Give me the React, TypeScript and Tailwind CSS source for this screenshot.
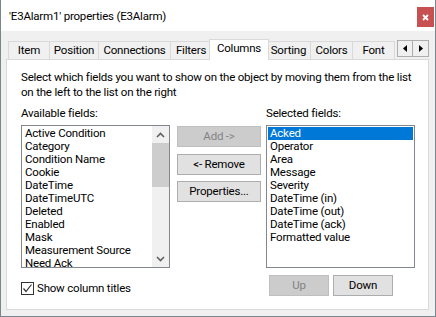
import React from "react";

// Tabs across the top of the property sheet, widths taken from the screenshot
const tabs = [
  { label: "Item", w: "w-[41px]" },
  { label: "Position", w: "w-[49px]" },
  { label: "Connections", w: "w-[72px]" },
  { label: "Filters", w: "w-[41px]" },
  { label: "Columns", w: "w-[60px]", selected: true },
  { label: "Sorting", w: "w-[44px]" },
  { label: "Colors", w: "w-[42px]" },
  { label: "Font", w: "w-[43px]", last: true },
];

const available = [
  "Active Condition",
  "Category",
  "Condition Name",
  "Cookie",
  "DateTime",
  "DateTimeUTC",
  "Deleted",
  "Enabled",
  "Mask",
  "Measurement Source",
  "Need Ack",
];

const selected = [
  "Acked",
  "Operator",
  "Area",
  "Message",
  "Severity",
  "DateTime (in)",
  "DateTime (out)",
  "DateTime (ack)",
  "Formatted value",
];

function Chevron({ up }: { up?: boolean }) {
  return (
    <svg width="9" height="6" viewBox="0 0 9 6">
      <polyline
        points={up ? "1,5 4.5,1.5 8,5" : "1,1 4.5,4.5 8,1"}
        fill="none"
        stroke="#606060"
        strokeWidth="1.6"
      />
    </svg>
  );
}

function Button({ children, disabled, className = "" }: { children: React.ReactNode; disabled?: boolean; className?: string }) {
  return (
    <div
      className={
        "h-[21px] flex items-center justify-center border " +
        (disabled ? "bg-[#cccccc] border-[#bfbfbf] text-[#838383] " : "bg-[#e1e1e1] border-[#adadad] text-black ") +
        className
      }
    >
      {children}
    </div>
  );
}

export default function App() {
  return (
    <div className="w-[436px] h-[317px] flex flex-col border-l border-r border-b border-[#7b858c] bg-[#f0f0f0] text-[11.5px] tracking-[-0.2px] leading-[15px] text-black font-['Roboto','Liberation_Sans',sans-serif] overflow-hidden">
      {/* title bar */}
      <div className="h-[31px] shrink-0 bg-white flex items-start">
        <div className="pl-[8px] pt-[9px]">'E3Alarm1' properties (E3Alarm)</div>
        <div className="ml-auto mr-[1px] mt-[7px] w-[17px] h-[20px] bg-[#c75050] flex items-center justify-center">
          <svg width="7" height="7" viewBox="0 0 7 7">
            <path d="M1 1 L6 6 M6 1 L1 6" stroke="white" strokeWidth="1.8" />
          </svg>
        </div>
      </div>

      {/* body */}
      <div className="pt-[8px] pl-[5px] w-[428px]">
        {/* tab row */}
        <div className="h-[20px] flex items-end pl-[2px]">
          {tabs.map((t) =>
            t.selected ? (
              <div
                key={t.label}
                className={t.w + " relative z-10 -ml-[2px] -mr-[3px] -mb-[1px] h-[21px] bg-white border-t border-l border-r border-[#d9d9d9] text-center pt-[1px]"}
              >
                {t.label}
              </div>
            ) : (
              <div
                key={t.label}
                className={
                  t.w +
                  " h-[18px] bg-[#f0f0f0] border-t border-l border-[#d9d9d9] text-center pt-[1px] whitespace-nowrap overflow-hidden" +
                  (t.last ? " border-r" : "")
                }
              >
                {t.label}
              </div>
            )
          )}
          <div className="ml-auto mb-[2px] flex h-[17px] border border-[#adadad] bg-[#f0f0f0]">
            <div className="w-[15px] flex items-center justify-center border-r border-[#adadad]">
              <svg width="4" height="7" viewBox="0 0 4 7">
                <path d="M4 0 L0 3.5 L4 7 Z" fill="#000" />
              </svg>
            </div>
            <div className="w-[15px] flex items-center justify-center">
              <svg width="4" height="7" viewBox="0 0 4 7">
                <path d="M0 0 L4 3.5 L0 7 Z" fill="#000" />
              </svg>
            </div>
          </div>
        </div>

        {/* tab page */}
        <div className="h-[251px] bg-white border border-[#d9d9d9] pl-[14px] pt-[10px]">
          <div className="whitespace-nowrap">
            <div>Select which fields you want to show on the object by moving them from the list</div>
            <div>on the left to the list on the right</div>
          </div>

          <div className="flex mt-[6px]">
            {/* available fields */}
            <div className="w-[149px] flex flex-col">
              <div className="h-[19px]">Available fields:</div>
              <div className="h-[143px] border border-[#828790] flex">
                <div className="flex-1 pt-[1px] pl-[3px] leading-[13px] overflow-hidden whitespace-nowrap">
                  {available.map((a) => (
                    <div key={a} className="h-[13px]">
                      {a}
                    </div>
                  ))}
                </div>
                <div className="w-[17px] bg-[#f0f0f0] flex flex-col">
                  <div className="h-[17px] flex items-center justify-center">
                    <Chevron up />
                  </div>
                  <div className="h-[44px] bg-[#cdcdcd]" />
                  <div className="flex-1" />
                  <div className="h-[17px] flex items-center justify-center">
                    <Chevron />
                  </div>
                </div>
              </div>
              <div className="mt-[13px] flex items-center">
                <div className="w-[13px] h-[13px] border border-[#333333] bg-white flex items-center justify-center">
                  <svg width="11" height="11" viewBox="0 0 11 11">
                    <polyline points="1.5,5.5 4,8.5 9.5,1.5" fill="none" stroke="#333333" strokeWidth="1.2" />
                  </svg>
                </div>
                <span className="ml-[3px]">Show column titles</span>
              </div>
            </div>

            {/* middle buttons */}
            <div className="w-[84px] ml-[7px] pt-[20px] flex flex-col">
              <Button disabled>Add -&gt;</Button>
              <Button className="mt-[7px]">&lt;- Remove</Button>
              <Button className="mt-[6px]">Properties...</Button>
            </div>

            {/* selected fields */}
            <div className="w-[149px] ml-[5px] flex flex-col">
              <div className="h-[19px]">Selected fields:</div>
              <div className="h-[143px] border border-[#828790] p-[1px] leading-[13px] whitespace-nowrap overflow-hidden">
                {selected.map((s, i) => (
                  <div key={s} className={"h-[13px] pl-[2px] " + (i === 0 ? "bg-[#0078d7] text-white" : "")}>
                    {s}
                  </div>
                ))}
              </div>
              <div className="mt-[7px] ml-[3px] flex gap-[4px]">
                <Button disabled className="w-[60px]">Up</Button>
                <Button className="w-[60px]">Down</Button>
              </div>
            </div>
          </div>
        </div>
      </div>
    </div>
  );
}
